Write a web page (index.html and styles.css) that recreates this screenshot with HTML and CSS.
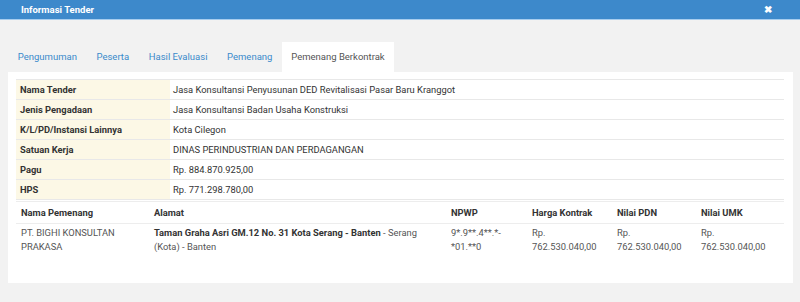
FILE: index.html
```html
<!DOCTYPE html>
<html>
<head>
<meta charset="utf-8">
<link rel="stylesheet" href="styles.css">
</head>
<body>
<div class="modal">
  <div class="modal-header">
    <span class="modal-title">Informasi Tender</span>
    <span class="close">&#x2716;</span>
  </div>
  <div class="modal-body">
    <ul class="tabs">
      <li class="tab">Pengumuman</li>
      <li class="tab">Peserta</li>
      <li class="tab">Hasil Evaluasi</li>
      <li class="tab">Pemenang</li>
      <li class="tab active">Pemenang Berkontrak</li>
    </ul>
    <div class="panel">
      <table class="info">
        <tr><th>Nama Tender</th><td>Jasa Konsultansi Penyusunan DED Revitalisasi Pasar Baru Kranggot</td></tr>
        <tr><th>Jenis Pengadaan</th><td>Jasa Konsultansi Badan Usaha Konstruksi</td></tr>
        <tr><th>K/L/PD/Instansi Lainnya</th><td>Kota Cilegon</td></tr>
        <tr><th>Satuan Kerja</th><td>DINAS PERINDUSTRIAN DAN PERDAGANGAN</td></tr>
        <tr><th>Pagu</th><td>Rp. 884.870.925,00</td></tr>
        <tr><th>HPS</th><td>Rp. 771.298.780,00</td></tr>
      </table>
      <table class="winners">
        <thead>
          <tr>
            <th class="c-nama">Nama Pemenang</th>
            <th class="c-alamat">Alamat</th>
            <th class="c-npwp">NPWP</th>
            <th class="c-harga">Harga Kontrak</th>
            <th class="c-pdn">Nilai PDN</th>
            <th class="c-umk">Nilai UMK</th>
          </tr>
        </thead>
        <tbody>
          <tr>
            <td>PT. BIGHI KONSULTAN PRAKASA</td>
            <td><b>Taman Graha Asri GM.12 No. 31 Kota Serang - Banten</b> - Serang (Kota) - Banten</td>
            <td>9*.9**.4**.*-*01.**0</td>
            <td>Rp. 762.530.040,00</td>
            <td>Rp. 762.530.040,00</td>
            <td>Rp. 762.530.040,00</td>
          </tr>
        </tbody>
      </table>
    </div>
  </div>
</div>
</body>
</html>
```

FILE: styles.css
```css
html, body {
  margin: 0;
  padding: 0;
  background: #f2f2f2;
  font-family: Roboto, "Liberation Sans", sans-serif;
  font-size: 9.35px;
  color: #333;
}
.modal-header {
  height: 19px;
  background: #3d89cb;
  border-bottom: 1px solid #a8cdee;
  display: flex;
  align-items: center;
  justify-content: space-between;
  padding: 0 28px 0 21px;
}
.modal-title {
  color: #fff;
  font-weight: bold;
  font-size: 9.5px;
}
.close {
  color: #fff;
  font-size: 10px;
  font-weight: bold;
}
.modal-body {
  padding: 22px 7px 18px 8px;
}
.tabs {
  list-style: none;
  margin: 0;
  padding: 0;
  display: flex;
  height: 30px;
}
.tab {
  padding: 0 9.8px;
  line-height: 30px;
  font-size: 9.5px;
  color: #3a8acb;
}
.tab.active {
  background: #fff;
  color: #555;
  padding: 0 9px;
}
.panel {
  background: #fff;
  padding: 7px 9px 29px 8px;
}
table {
  border-collapse: collapse;
  width: 100%;
}
.info th, .info td {
  height: 19px;
  padding: 0 4px;
  border-top: 1px solid #e8e8e8;
  text-align: left;
  vertical-align: middle;
}
.info tr:last-child th, .info tr:last-child td {
  border-bottom: 1px solid #e8e8e8;
}
.info th {
  width: 146px;
  background: #fcf8e6;
  font-weight: bold;
  color: #333;
}
.info td {
  padding-left: 3px;
}
.winners {
  margin-top: 1px;
}
.winners th, .winners td {
  text-align: left;
  vertical-align: top;
  padding: 0 5px;
}
.winners th {
  height: 21px;
  vertical-align: middle;
  border-top: 1px solid #ededed;
  border-bottom: 1px solid #ededed;
  font-weight: bold;
  color: #333;
}
.winners td {
  padding-top: 2px;
  line-height: 14px;
  color: #555;
}
.winners td b {
  color: #333;
}
.c-nama { width: 123px; }
.c-alamat { width: 287px; }
.c-npwp { width: 71px; }
.c-harga { width: 75px; }
.c-pdn { width: 74px; }
```
